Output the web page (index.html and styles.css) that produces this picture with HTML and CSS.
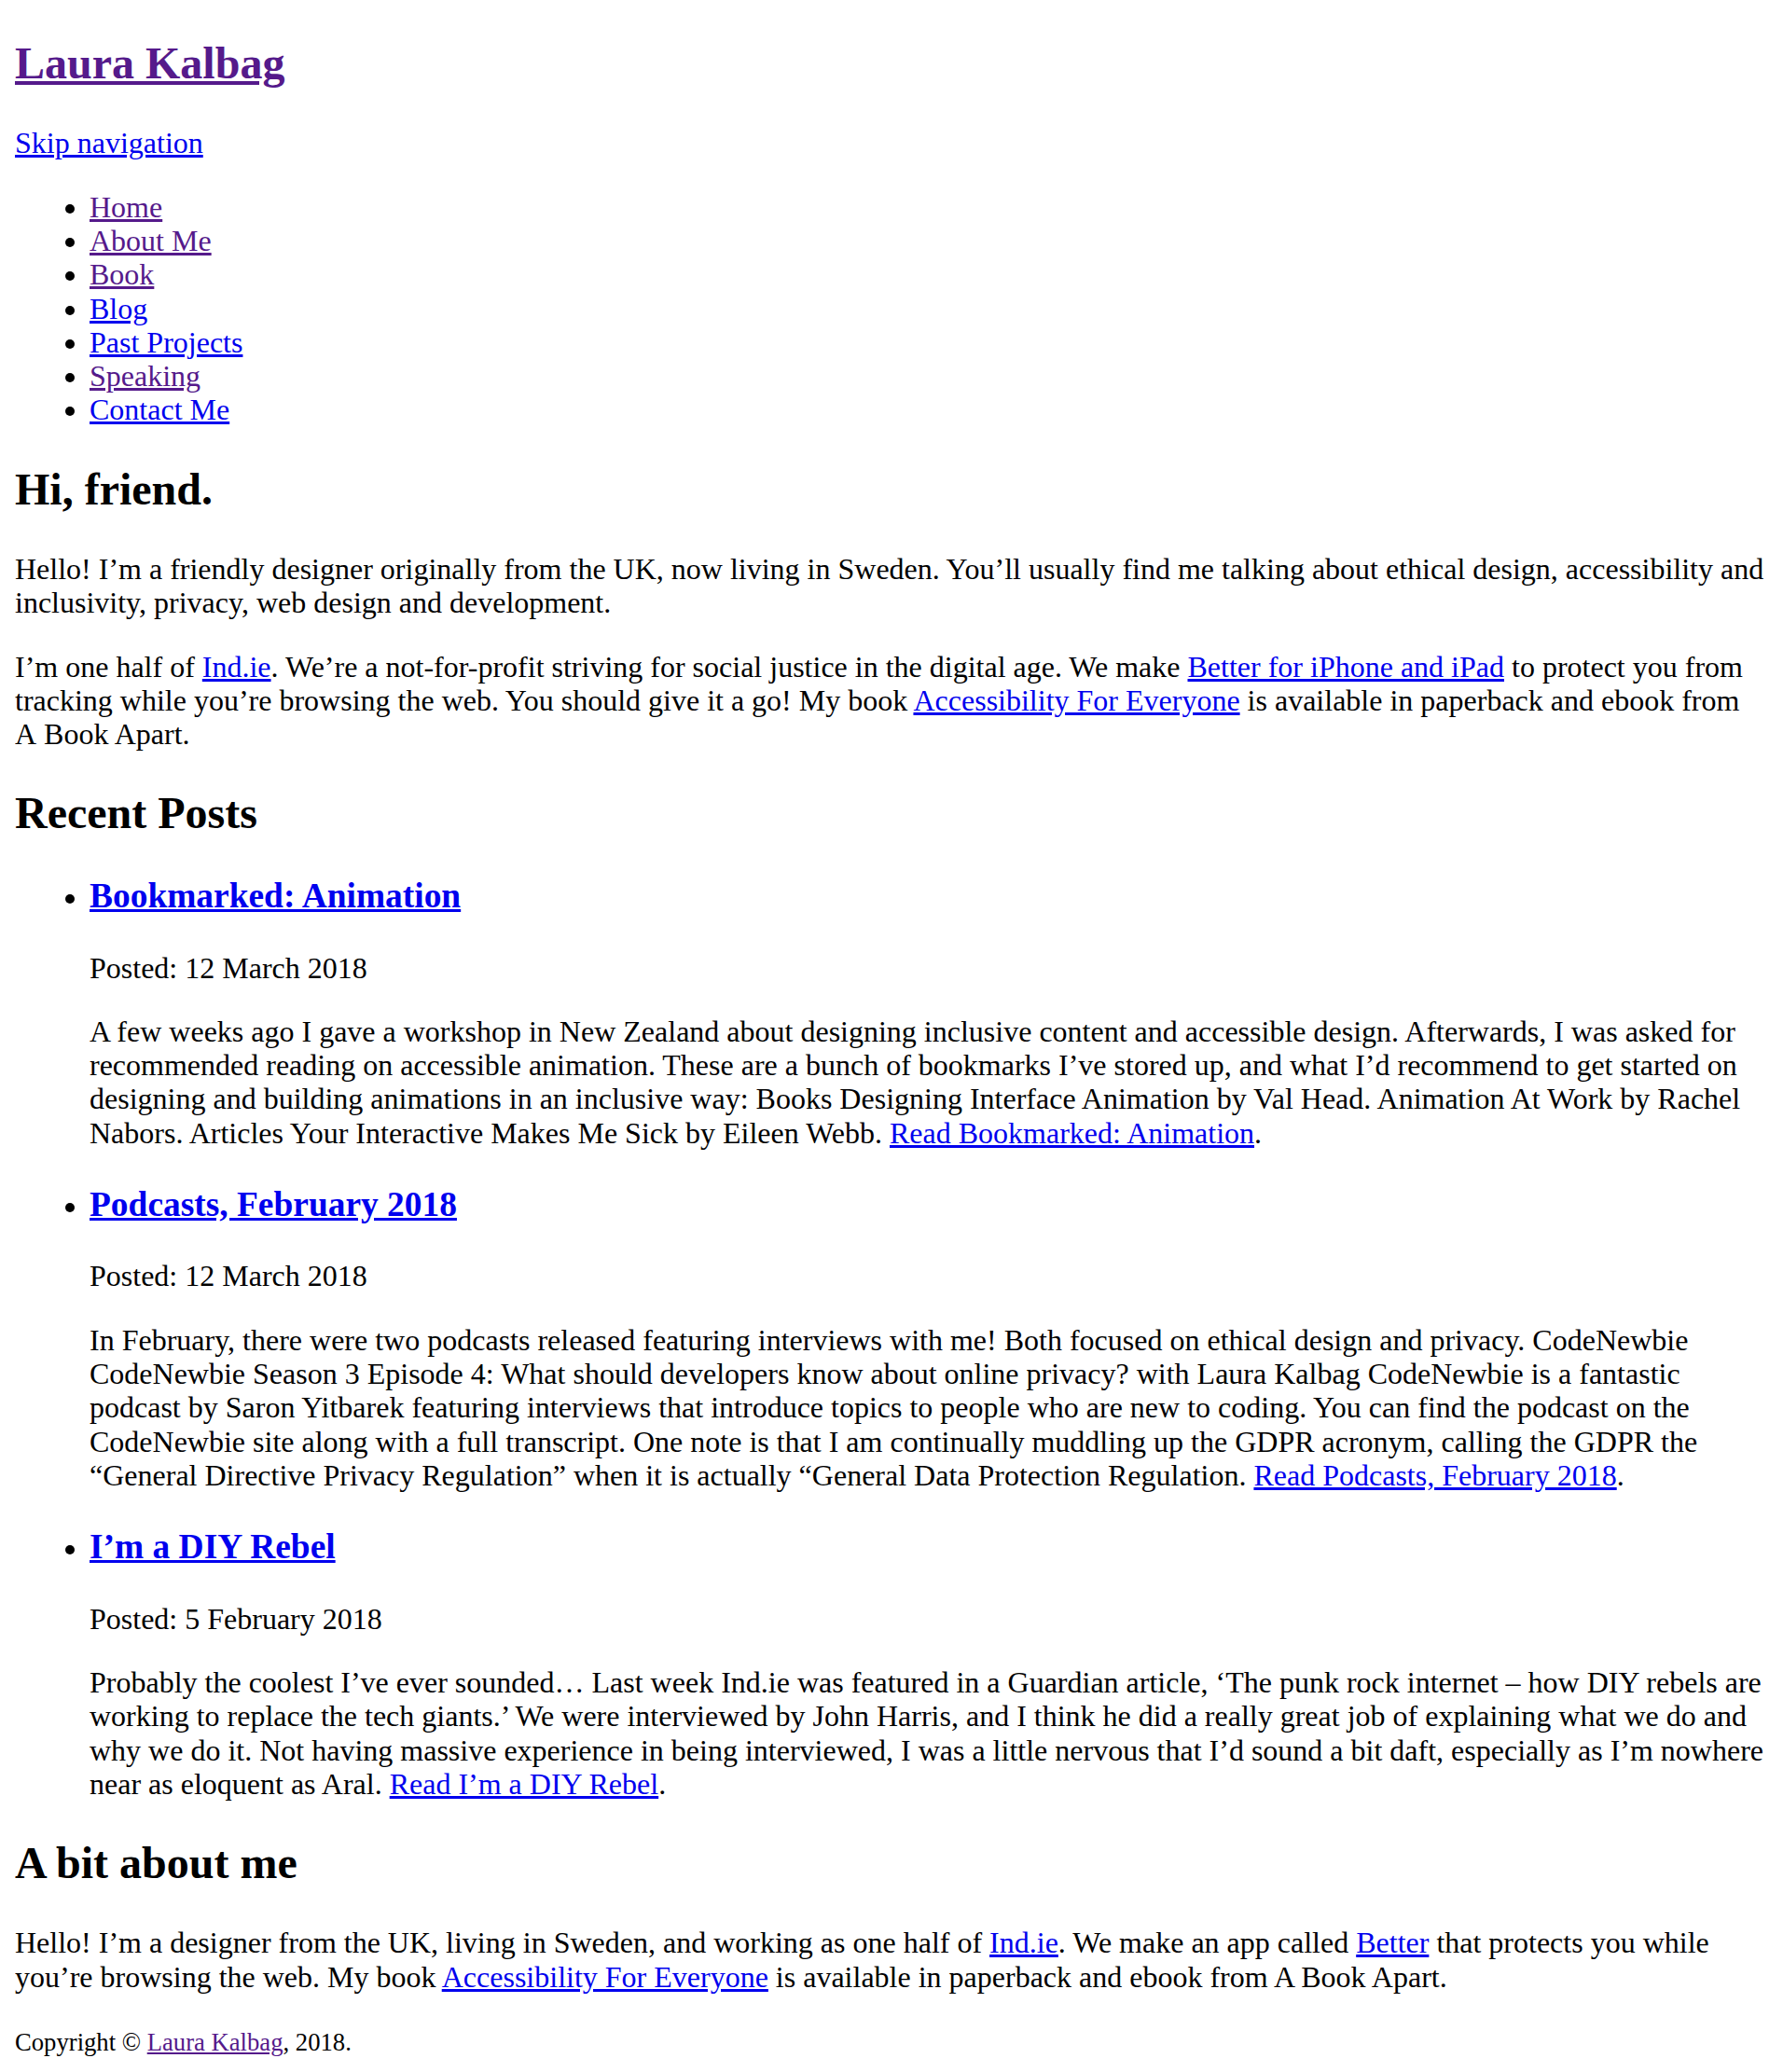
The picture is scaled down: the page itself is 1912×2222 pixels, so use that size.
FILE: index.html
```html
<!DOCTYPE html>
<html lang="en">
<head>
<meta charset="utf-8">
<title>Laura Kalbag</title>
<link rel="stylesheet" href="styles.css">
</head>
<body>
<div class="page">
  <header>
    <h1 class="site-title"><a class="visited" href="#">Laura Kalbag</a></h1>
    <p><a href="#main">Skip navigation</a></p>
    <nav>
      <ul class="list">
        <li><a class="visited" href="#">Home</a></li>
        <li><a class="visited" href="#">About Me</a></li>
        <li><a class="visited" href="#">Book</a></li>
        <li><a href="#">Blog</a></li>
        <li><a href="#">Past Projects</a></li>
        <li><a class="visited" href="#">Speaking</a></li>
        <li><a href="#">Contact Me</a></li>
      </ul>
    </nav>
  </header>
  <main id="main">
    <h2 class="heading">Hi, friend.</h2>
    <p>Hello! I’m a friendly designer originally from the UK, now living in Sweden. You’ll usually find me talking about ethical design, accessibility and inclusivity, privacy, web design and development.</p>
    <p>I’m one half of <a href="#">Ind.ie</a>. We’re a not-for-profit striving for social justice in the digital age. We make <a href="#">Better for iPhone and iPad</a> to protect you from tracking while you’re browsing the web. You should give it a go! My book <a href="#">Accessibility For Everyone</a> is available in paperback and ebook from A&nbsp;Book Apart.</p>
    <h2 class="heading">Recent Posts</h2>
    <ul class="list">
      <li>
        <h3 class="post-title"><a href="#">Bookmarked: Animation</a></h3>
        <p>Posted: 12 March 2018</p>
        <p>A few weeks ago I gave a workshop in New Zealand about designing inclusive content and accessible design. Afterwards, I was asked for recommended reading on accessible animation. These are a bunch of bookmarks I’ve stored up, and what I’d recommend to get started on designing and building animations in an inclusive way: Books Designing Interface Animation by Val Head. Animation At Work by Rachel Nabors. Articles Your Interactive Makes Me Sick by Eileen Webb. <a href="#">Read Bookmarked: Animation</a>.</p>
      </li>
      <li>
        <h3 class="post-title"><a href="#">Podcasts, February 2018</a></h3>
        <p>Posted: 12 March 2018</p>
        <p>In February, there were two podcasts released featuring interviews with me! Both focused on ethical design and privacy. CodeNewbie CodeNewbie Season 3 Episode 4: What should developers know about online privacy? with Laura Kalbag CodeNewbie is a fantastic podcast by Saron Yitbarek featuring interviews that introduce topics to people who are new to coding. You can find the podcast on the CodeNewbie site along with a full transcript. One note is that I am continually muddling up the GDPR acronym, calling the GDPR the “General Directive Privacy Regulation” when it is actually “General Data Protection Regulation. <a href="#">Read Podcasts, February 2018</a>.</p>
      </li>
      <li>
        <h3 class="post-title"><a href="#">I’m a DIY Rebel</a></h3>
        <p>Posted: 5 February 2018</p>
        <p>Probably the coolest I’ve ever sounded… Last week Ind.ie was featured in a Guardian article, ‘The punk rock internet – how DIY rebels are working to replace the tech giants.’ We were interviewed by John Harris, and I think he did a really great job of explaining what we do and why we do it. Not having massive experience in being interviewed, I was a little nervous that I’d sound a bit daft, especially as I’m nowhere near as eloquent as Aral. <a href="#">Read I’m a DIY Rebel</a>.</p>
      </li>
    </ul>
  </main>
  <footer>
    <h2 class="heading">A bit about me</h2>
    <p>Hello! I’m a designer from the UK, living in Sweden, and working as one half of <a href="#">Ind.ie</a>. We make an app called <a href="#">Better</a> that protects you while you’re browsing the web. My book <a href="#">Accessibility For Everyone</a> is available in paperback and ebook from A Book Apart.</p>
    <p><small class="copyright">Copyright © <a class="visited" href="#">Laura Kalbag</a>, 2018.</small></p>
  </footer>
</div>
</body>
</html>
```
FILE: styles.css
```css
html {
  background: #fff;
}
body {
  margin: 16px;
  font-family: "Liberation Serif", "Times New Roman", serif;
  font-size: 32px;
  line-height: 1.135;
  color: #000;
}
p {
  margin: 1em 0;
}
a {
  color: #0000ee;
  text-decoration: underline;
}
a.visited {
  color: #551a8b;
}
.site-title,
.heading {
  font-size: 1.5em;
  font-weight: bold;
  margin: 0.83em 0;
}
.site-title {
  margin-top: 25px;
}
.post-title {
  font-size: 1.17em;
  font-weight: bold;
  margin: 1em 0;
}
.list {
  list-style: disc;
  margin: 1em 0;
  padding-left: 80px;
}
.copyright {
  font-size: 0.8333em;
}
```
